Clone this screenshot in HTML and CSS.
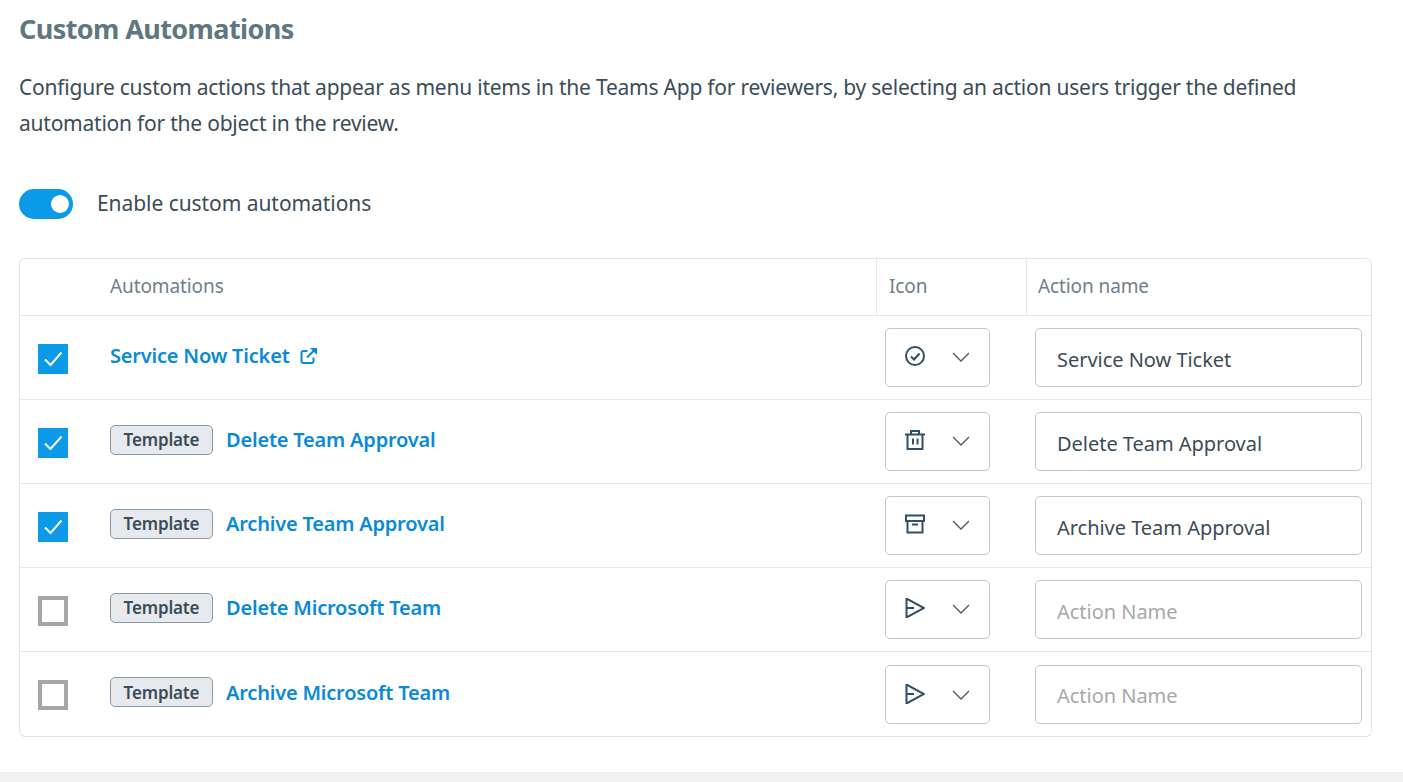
FILE: index.html
```html
<!DOCTYPE html>
<html>
    <head>
        <title>Custom Automations</title>
        <link rel="stylesheet" href="styles.css">
    </head>
    <body>
        <div class="page">
            <h2 class="title">Custom Automations</h2>
            <p class="desc">Configure custom actions that appear as menu items in the Teams App for reviewers, by selecting an action users trigger the defined automation for the object in the review.</p>
            <div class="enable">
                <span class="toggle"><span class="knob"></span></span>
                <span class="enable-label">Enable custom automations</span>
            </div>
            <div class="card">
                <div class="row head">
                    <div class="c-check"></div>
                    <div class="c-name">Automations</div>
                    <div class="c-icon">Icon</div>
                    <div class="c-action">Action name</div>
                </div>
                <div class="row">
                    <div class="c-check"><span class="box on"><svg viewBox="0 0 30 30"><path d="M7 15.500l5.500 5.500 11-12.500"/></svg></span></div>
                    <div class="c-name"><a class="link">Service Now Ticket</a>
                        <svg class="ext" viewBox="0 0 18 18"><path d="M14 10.500v3.500a2 2 0 0 1-2 2H4a2 2 0 0 1-2-2V6a2 2 0 0 1 2-2h4"/><path d="M7.500 10.500L15.500 2.500"/><path class="fill" d="M10.500 1h7v7z"/></svg>
                    </div>
                    <div class="c-icon"><div class="select">
                        <svg class="ico" viewBox="0 0 20 20"><circle cx="10" cy="10" r="9"/><path d="M6 10.500l3 3 5.500-6"/></svg>
                        <svg class="chev" viewBox="0 0 18 10"><path d="M1 1l8 8 8-8"/></svg>
                    </div></div>
                    <div class="c-action"><input class="field" value="Service Now Ticket" placeholder="Action Name"></div>
                </div>
                <div class="row">
                    <div class="c-check"><span class="box on"><svg viewBox="0 0 30 30"><path d="M7 15.500l5.500 5.500 11-12.500"/></svg></span></div>
                    <div class="c-name"><span class="tag">Template</span><a class="link">Delete Team Approval</a></div>
                    <div class="c-icon"><div class="select">
                        <svg class="ico" viewBox="0 0 20 20"><path d="M0 4.500h20M6 4.500V1h8v3.500M2.500 4.500V19h15V4.500M8 8.500v6M12.500 8.500v6"/></svg>
                        <svg class="chev" viewBox="0 0 18 10"><path d="M1 1l8 8 8-8"/></svg>
                    </div></div>
                    <div class="c-action"><input class="field" value="Delete Team Approval" placeholder="Action Name"></div>
                </div>
                <div class="row">
                    <div class="c-check"><span class="box on"><svg viewBox="0 0 30 30"><path d="M7 15.500l5.500 5.500 11-12.500"/></svg></span></div>
                    <div class="c-name"><span class="tag">Template</span><a class="link">Archive Team Approval</a></div>
                    <div class="c-icon"><div class="select">
                        <svg class="ico" viewBox="0 0 20 20"><path d="M1 1.500h18V7H1zM2.500 7v11.500h15V7M7 10.500h6"/></svg>
                        <svg class="chev" viewBox="0 0 18 10"><path d="M1 1l8 8 8-8"/></svg>
                    </div></div>
                    <div class="c-action"><input class="field" value="Archive Team Approval" placeholder="Action Name"></div>
                </div>
                <div class="row">
                    <div class="c-check"><span class="box"></span></div>
                    <div class="c-name"><span class="tag">Template</span><a class="link">Delete Microsoft Team</a></div>
                    <div class="c-icon"><div class="select">
                        <svg class="ico" viewBox="0 0 20 20"><path d="M1.500 0.500L19 10 1.500 19.500zM1.500 10H9"/></svg>
                        <svg class="chev" viewBox="0 0 18 10"><path d="M1 1l8 8 8-8"/></svg>
                    </div></div>
                    <div class="c-action"><input class="field" placeholder="Action Name"></div>
                </div>
                <div class="row last">
                    <div class="c-check"><span class="box"></span></div>
                    <div class="c-name"><span class="tag">Template</span><a class="link">Archive Microsoft Team</a></div>
                    <div class="c-icon"><div class="select">
                        <svg class="ico" viewBox="0 0 20 20"><path d="M1.500 0.500L19 10 1.500 19.500zM1.500 10H9"/></svg>
                        <svg class="chev" viewBox="0 0 18 10"><path d="M1 1l8 8 8-8"/></svg>
                    </div></div>
                    <div class="c-action"><input class="field" placeholder="Action Name"></div>
                </div>
            </div>
        </div>
        <div class="band"></div>
    </body>
</html>
```

FILE: styles.css
```css
*{
    box-sizing: border-box;
}
html, body{
    height: 100%;
}
body{
    margin: 0;
    background: #ffffff;
    font-family: "Noto Sans", sans-serif;
    color: #3a4c58;
    overflow: hidden;
}
.page{
    height: 772px;
    padding: 12px 31px 0 19px;
}
.title{
    margin: 0;
    font-size: 27px;
    line-height: 34px;
    font-weight: 700;
    color: #607680;
    letter-spacing: -0.6px;
}
.desc{
    margin: 23px 0 0;
    font-size: 21px;
    line-height: 36px;
    letter-spacing: -0.23px;
}
.enable{
    display: flex;
    align-items: center;
    margin-top: 48px;
    height: 30px;
}
.toggle{
    display: flex;
    justify-content: flex-end;
    align-items: center;
    width: 54px;
    height: 30px;
    padding-right: 4px;
    border-radius: 15px;
    background: #0a9ae8;
}
.knob{
    width: 18px;
    height: 18px;
    border-radius: 50%;
    background: #ffffff;
}
.enable-label{
    margin: 0 0 2px 24px;
    font-size: 21px;
    letter-spacing: -0.06px;
}
.card{
    margin-top: 39px;
    border: 1px solid #e3e6e8;
    border-bottom-color: #dde1e5;
    border-radius: 6px;
}
.row{
    display: flex;
    height: 84px;
    border-bottom: 1px solid #e6e8ea;
}
.row.head{
    height: 57px;
    font-size: 19px;
    color: #6f8089;
    letter-spacing: -0.1px;
}
.row.last{
    border-bottom: none;
}
.c-check{
    display: flex;
    align-items: center;
    width: 90px;
    padding: 2px 0 0 18px;
}
.c-name{
    display: flex;
    align-items: center;
    width: 766px;
    margin-top: -4px;
}
.head .c-name,
.head .c-icon,
.head .c-action{
    margin-top: 0;
    padding-bottom: 2px;
}
.c-icon{
    display: flex;
    align-items: center;
    width: 150px;
    padding: 0 0 1px 9px;
}
.c-action{
    display: flex;
    align-items: center;
    flex: 1;
    padding: 0 0 1px 9px;
}
.last .c-icon,
.last .c-action{
    padding: 1px 0 0 9px;
}
.head .c-icon{
    border-left: 1px solid #e6e8ea;
    padding-left: 12px;
}
.head .c-action{
    border-left: 1px solid #e6e8ea;
    padding-left: 11px;
}
.box{
    display: block;
    width: 30px;
    height: 30px;
    border: 4px solid #a6a6a6;
    background: #ffffff;
}
.box.on{
    border: none;
    background: #0a9ae8;
}
.box svg{
    display: block;
    width: 30px;
    height: 30px;
    fill: none;
    stroke: #ffffff;
    stroke-width: 2;
}
.link{
    font-size: 20px;
    font-weight: 600;
    color: #0a8ad6;
    letter-spacing: -0.2px;
}
.ext{
    width: 19px;
    height: 18px;
    margin-left: 9px;
    fill: none;
    stroke: #0a8ad6;
    stroke-width: 2;
}
.ext .fill{
    fill: #0a8ad6;
    stroke: none;
}
.tag{
    display: inline-flex;
    align-items: center;
    justify-content: center;
    width: 103px;
    height: 30px;
    margin-right: 13px;
    border: 1px solid #8a9aa6;
    border-radius: 5px;
    background: #e6e9ed;
    font-size: 17px;
    font-weight: 600;
    color: #3a4c58;
    letter-spacing: -0.15px;
}
.select{
    display: flex;
    align-items: center;
    width: 105px;
    height: 59px;
    padding-left: 19px;
    border: 1px solid #c6c6c6;
    border-radius: 5px;
}
.ico{
    width: 20px;
    height: 20px;
    margin-top: -2px;
    fill: none;
    stroke: #2f5068;
    stroke-width: 2;
}
.chev{
    width: 18px;
    height: 10px;
    margin-left: 27px;
    fill: none;
    stroke: #47586a;
    stroke-width: 1.3;
}
.field{
    width: 327px;
    height: 59px;
    padding: 4px 21px 0;
    border: 1px solid #c6c6c6;
    border-radius: 5px;
    outline: none;
    font-family: "Noto Sans", sans-serif;
    font-size: 20px;
    letter-spacing: -0.03px;
    color: #3a4c58;
}
.last .field{
    padding-top: 2px;
}
.field::placeholder{
    color: #a8a8a8;
    opacity: 1;
}
.band{
    height: 10px;
    background: #f0f2f4;
}
```
